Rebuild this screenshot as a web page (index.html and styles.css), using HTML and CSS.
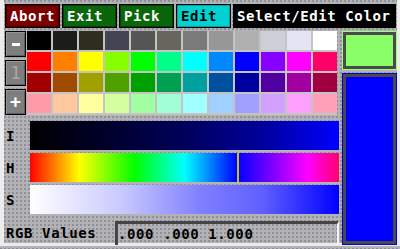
FILE: index.html
```html
<!DOCTYPE html>
<html lang="en">
<head>
    <meta charset="UTF-8">
    <title>Select/Edit Color</title>
    <link rel="stylesheet" href="styles.css">
</head>
<body>
    <div class="window">
        <!-- top button bar -->
        <div class="toolbar">
            <div class="btn btn-abort">Abort</div>
            <div class="btn btn-green">Exit</div>
            <div class="btn btn-green">Pick</div>
            <div class="btn btn-edit">Edit</div>
            <div class="btn btn-title">Select/Edit Color</div>
        </div>

        <div class="content">
            <div class="main">
                <div class="palette-row">
                    <div class="side-buttons">
                        <div class="side-btn"><span class="minus"></span></div>
                        <div class="side-btn side-btn-dim">1</div>
                        <div class="side-btn">+</div>
                    </div>
                    <div class="palette" id="palette"></div>
                </div>

                <div class="sliders">
                    <div class="slider-row">
                        <span class="slider-label">I</span>
                        <div class="bar bar-i"></div>
                    </div>
                    <div class="slider-row">
                        <span class="slider-label">H</span>
                        <div class="bar bar-h">
                            <div class="hue-marker"></div>
                        </div>
                    </div>
                    <div class="slider-row">
                        <span class="slider-label">S</span>
                        <div class="bar bar-s"></div>
                    </div>
                </div>

                <div class="rgb-row">
                    <span class="rgb-label">RGB Values</span>
                    <div class="rgb-box">.000 .000 1.000</div>
                </div>
            </div>

            <div class="preview">
                <div class="swatch swatch-old"></div>
                <div class="swatch swatch-new"></div>
            </div>
        </div>
    </div>

    <script>
        // 12 x 4 color palette
        const colors = [
            '#000000', '#1c1c18', '#2e2e20', '#444454', '#555555', '#66665e', '#7a7a7a', '#979797', '#b0b0b0', '#cfcfd8', '#e4e4f2', '#ffffff',
            '#ff0000', '#ff8000', '#ffff00', '#88ff00', '#00ff00', '#00ff88', '#00ffff', '#0088ff', '#0000ff', '#8800ff', '#ff00ff', '#ff0066',
            '#a00000', '#a04c00', '#a0a000', '#50a000', '#00a000', '#00a050', '#00a0a0', '#0050a0', '#0000a0', '#5000a0', '#a000a0', '#a00040',
            '#ff9aa8', '#ffc8a0', '#ffffa0', '#d4ffa0', '#a0ffa0', '#a0ffd4', '#a0ffff', '#a0d0ff', '#a0a0ff', '#d4a0ff', '#ffa0ff', '#ffa0b8'
        ];
        const palette = document.getElementById('palette');
        colors.forEach(function(c) {
            const cell = document.createElement('div');
            cell.className = 'cell';
            cell.style.background = c;
            palette.appendChild(cell);
        });
    </script>
</body>
</html>
```

FILE: styles.css
```css
html, body {
    margin: 0;
    padding: 0;
}

body {
    width: 400px;
    height: 249px;
    overflow: hidden;
    font-family: 'DejaVu Sans Mono', 'Liberation Mono', monospace;
    font-weight: bold;
    font-size: 14px;
    letter-spacing: 0.6px;
    background-color: #b3b3b3;
    background-image: radial-gradient(circle at 1px 1px, #8e8e9e 0.8px, transparent 1px);
    background-size: 4px 4px;
}

.window {
    box-sizing: border-box;
    width: 400px;
    height: 246px;
    border-left: 4px solid #ececec;
    border-right: 3px solid #ececec;
    border-bottom: 3px solid #ececec;
    display: flex;
    flex-direction: column;
}

/* top bar */
.toolbar {
    display: flex;
    gap: 2px;
    height: 24px;
    margin: 4px 1px 0 1px;
}

.btn {
    box-sizing: border-box;
    width: 55px;
    height: 24px;
    line-height: 22px;
    padding-left: 4px;
    border: 1px solid #000;
    color: #fff;
}

.btn-abort {
    background: #7a0000;
    box-shadow: inset 0 0 0 1px #4a0000;
}

.btn-green {
    background: #0a660a;
    box-shadow: inset 0 0 0 1px #064006;
}

.btn-edit {
    background: #00d2d2;
    color: #000;
    box-shadow: inset 0 0 0 1px #00a0a0;
}

.btn-title {
    flex: 1;
    background: #000;
    padding-left: 3px;
}

/* main area */
.content {
    display: flex;
    flex: 1;
    margin-top: 3px;
}

.main {
    width: 334px;
    margin-left: 1px;
    display: flex;
    flex-direction: column;
}

.palette-row {
    display: flex;
    gap: 1px;
}

.side-buttons {
    display: flex;
    flex-direction: column;
    gap: 3px;
    width: 21px;
}

.side-btn {
    box-sizing: border-box;
    height: 26px;
    border: 1px solid #000;
    background: #7e7e7e;
    box-shadow: inset 1px 1px 0 #969696, inset -1px -1px 0 #5e5e5e;
    color: #fff;
    font-size: 18px;
    line-height: 24px;
    text-align: center;
    letter-spacing: 0;
    display: flex;
    align-items: center;
    justify-content: center;
}

.minus {
    width: 8px;
    height: 3px;
    background: #fff;
}

.side-btn-dim {
    color: #a8a8a8;
    font-weight: normal;
    font-size: 17px;
}

.palette {
    display: grid;
    grid-template-columns: repeat(12, 24px);
    grid-template-rows: repeat(4, 19px);
    gap: 2px;
    background: #c4c4c4;
    height: 84px;
    align-content: start;
}

.sliders {
    display: flex;
    flex-direction: column;
    gap: 3px;
    margin-top: 6px;
}

.slider-row {
    display: flex;
    align-items: center;
    height: 29px;
}

.slider-label {
    width: 24px;
    padding-left: 1px;
    color: #000;
}

.bar {
    flex: 1;
    height: 29px;
    position: relative;
}

.bar-i {
    background: linear-gradient(90deg, #000 0%, #00002c 25%, #00005c 50%, #00009c 75%, #0000ff 100%);
}

.bar-h {
    background: linear-gradient(90deg, #ff0000 0%, #ffff00 16%, #00ff00 34%, #00ffff 50%, #0000ff 67%, #ff00ff 90%, #ff0070 100%);
}

.hue-marker {
    position: absolute;
    left: 207px;
    top: 0;
    width: 2px;
    height: 100%;
    background: #c8c800;
}

.bar-s {
    background: linear-gradient(90deg, #ffffff 0%, #c8c8ff 30%, #8080ff 55%, #6060ff 75%, #0000ff 100%);
}

.rgb-row {
    display: flex;
    flex: 1;
    margin-top: 7px;
}

.rgb-label {
    width: 109px;
    padding-left: 1px;
    align-self: center;
    color: #000;
}

.rgb-box {
    flex: 1;
    box-sizing: border-box;
    border-top: 3px solid #444;
    border-left: 3px solid #444;
    border-right: 2px solid #f4f4f4;
    line-height: 21px;
    color: #000;
}

/* color preview column */
.preview {
    display: flex;
    flex-direction: column;
    gap: 3px;
    width: 55px;
    margin-left: 3px;
}

.swatch {
    box-sizing: border-box;
    box-shadow: inset 0 0 0 3px #4a4a4a;
}

.swatch-old {
    height: 39px;
    border: 1px solid #9cff7c;
    background: #88ff66;
}

.swatch-new {
    flex: 1;
    border: 1px solid #0000d0;
    background: #0000ff;
}
```
